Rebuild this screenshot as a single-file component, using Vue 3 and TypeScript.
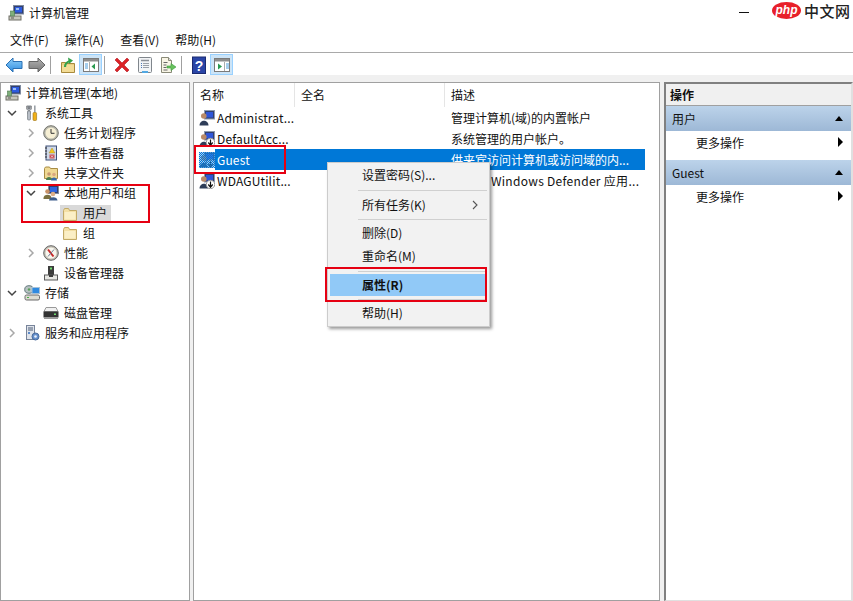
<script setup lang="ts">
interface TreeRow { label: string; depth: number; arrow: '' | 'open' | 'closed'; icon: string; selected?: boolean }
const tree: TreeRow[] = [
  { label: '计算机管理(本地)', depth: 0, arrow: '', icon: 'computer' },
  { label: '系统工具', depth: 1, arrow: 'open', icon: 'tools' },
  { label: '任务计划程序', depth: 2, arrow: 'closed', icon: 'clock' },
  { label: '事件查看器', depth: 2, arrow: 'closed', icon: 'event' },
  { label: '共享文件夹', depth: 2, arrow: 'closed', icon: 'share' },
  { label: '本地用户和组', depth: 2, arrow: 'open', icon: 'users' },
  { label: '用户', depth: 3, arrow: '', icon: 'folder', selected: true },
  { label: '组', depth: 3, arrow: '', icon: 'folder' },
  { label: '性能', depth: 2, arrow: 'closed', icon: 'perf' },
  { label: '设备管理器', depth: 2, arrow: '', icon: 'device' },
  { label: '存储', depth: 1, arrow: 'open', icon: 'storage' },
  { label: '磁盘管理', depth: 2, arrow: '', icon: 'disk' },
  { label: '服务和应用程序', depth: 1, arrow: 'closed', icon: 'service' },
]
const users = [
  { name: 'Administrat...', desc: '管理计算机(域)的内置帐户', down: false, sel: false, wide: false },
  { name: 'DefaultAcc...', desc: '系统管理的用户帐户。', down: true, sel: false, wide: false },
  { name: 'Guest', desc: '供来宾访问计算机或访问域的内...', down: true, sel: true, wide: false },
  { name: 'WDAGUtilit...', desc: '系统为 Windows Defender 应用...', down: true, sel: false, wide: true },
]
const menus = ['文件(F)', '操作(A)', '查看(V)', '帮助(H)']
const actions = ['用户', 'Guest']
</script>

<template>
  <div class="win">
    <div class="title">
      <svg class="i16" viewBox="0 0 16 16"><rect x="5.500" y="0.500" width="10" height="8.500" fill="#33406e" stroke="#7e8aa0"/><rect x="7" y="2" width="7" height="5.500" fill="#2d5be0"/><rect x="8" y="3" width="3" height="2" fill="#9cc0f4"/><rect x="1" y="11" width="12" height="4" fill="#c6c6bc" stroke="#6f6f66"/><rect x="2.500" y="6" width="4" height="5" fill="#7fae7a" stroke="#4c7a50" stroke-width=".6"/><rect x="3" y="12.500" width="3" height="1" fill="#5a5a52"/></svg>
      <span class="title-text">计算机管理</span>
      <span class="min"></span>
    </div>
    <div class="menubar">
      <span v-for="m in menus" :key="m" class="menu">{{ m }}</span>
    </div>
    <div class="toolbar">
      <span class="tb"><svg viewBox="0 0 18 18"><defs><linearGradient id="bk" x1="0" y1="0" x2="0" y2="1"><stop offset="0" stop-color="#8fd0fa"/><stop offset="1" stop-color="#2f8ce0"/></linearGradient></defs><path d="M1 9l7-7v3.500h9v7H8V16z" fill="url(#bk)" stroke="#2a70b4"/></svg></span>
      <span class="tb"><svg viewBox="0 0 18 18"><defs><linearGradient id="fw" x1="0" y1="0" x2="0" y2="1"><stop offset="0" stop-color="#b4b4b4"/><stop offset="1" stop-color="#777"/></linearGradient></defs><path d="M17 9l-7-7v3.500H1v7h9V16z" fill="url(#fw)" stroke="#666"/></svg></span>
      <span class="sep"></span>
      <span class="tb"><svg viewBox="0 0 18 18"><path d="M2.500 6.500h4l1 1h8v9h-13z" fill="#eacf82" stroke="#a88a3c"/><path d="M3 9h12v7H3z" fill="#f3dc96"/><path d="M6 11c0-4 2-5 5-6" stroke="#34a24a" stroke-width="2.200" fill="none"/><path d="M9 1.500l5 3-4 3.500z" fill="#34a24a"/></svg></span>
      <span class="tb on"><svg viewBox="0 0 18 18"><rect x="1.500" y="2.500" width="15" height="13" fill="#fff" stroke="#7a7a7a"/><rect x="2" y="3" width="14" height="2.500" fill="#8e8e8e"/><path d="M7.500 6v9" stroke="#aaa"/><path d="M3 8h3M3 10h3M3 12h3" stroke="#4b9ad8"/><path d="M13 7.500v6l-3.500-3z" fill="#2a9a50"/></svg></span>
      <span class="sep"></span>
      <span class="tb"><svg viewBox="0 0 18 18"><path d="M2 4l2-2 5 5 5-5 2 2-5 5 5 5-2 2-5-5-5 5-2-2 5-5z" fill="#dc2226" stroke="#b01820" stroke-width=".6"/></svg></span>
      <span class="tb"><svg viewBox="0 0 18 18"><rect x="2.500" y="1.500" width="13" height="15" rx="1" fill="#f2f4f6" stroke="#80868c"/><path d="M5 4.500h8" stroke="#8a8f96" stroke-width="1.500"/><path d="M7 7.500h6M7 9.500h6M7 11.500h6" stroke="#9aa0a8"/><path d="M5 7.500h1M5 9.500h1M5 11.500h1" stroke="#4b78b8"/><rect x="6" y="15" width="6" height="2" fill="#52a8e2"/></svg></span>
      <span class="tb"><svg viewBox="0 0 18 18"><path d="M2.500 1.500h7l3 3v12h-10z" fill="#f8f5e6" stroke="#8a8a78"/><path d="M9.500 1.500v3h3" fill="#ddd" stroke="#8a8a78"/><path d="M4.500 6.500h4M4.500 9h3M4.500 11.500h3M4.500 14h4" stroke="#666"/><path d="M8 10h4V7.500l5 3.500-5 3.500V12H8z" fill="#68c25c" stroke="#3d9a40" stroke-width=".6"/></svg></span>
      <span class="sep"></span>
      <span class="tb"><svg viewBox="0 0 18 18"><rect x="2.500" y="1" width="13" height="16.500" fill="#2a45a6" stroke="#1a2a70"/><text x="9" y="14.500" font-size="14" font-weight="700" fill="#fff" text-anchor="middle" font-family="Liberation Sans">?</text></svg></span>
      <span class="tb on"><svg viewBox="0 0 18 18"><rect x="1.500" y="2.500" width="15" height="13" fill="#fff" stroke="#7a7a7a"/><rect x="2" y="3" width="14" height="2.500" fill="#8e8e8e"/><path d="M11.500 6v9" stroke="#aaa"/><path d="M13 8h3M13 10h3M13 12h3" stroke="#4b9ad8"/><path d="M5 7.500v6l4-3z" fill="#2a9a50"/></svg></span>
    </div>
    <div class="panes">
      <div class="pane left">
        <div v-for="r in tree" :key="r.label" class="trow" :class="'d' + r.depth">
          <span class="arrow">
            <svg v-if="r.arrow === 'open'" viewBox="0 0 10 10"><path d="M1 3l4 4 4-4" fill="none" stroke="#444" stroke-width="1.500"/></svg>
            <svg v-else-if="r.arrow === 'closed'" viewBox="0 0 10 10"><path d="M3 1l4 4-4 4" fill="none" stroke="#a8a8a8" stroke-width="1.500"/></svg>
          </span>
          <span class="tcell" :class="{ sel: r.selected }">
            <svg class="i16" viewBox="0 0 16 16">
              <g v-if="r.icon === 'computer'"><rect x="5.500" y="0.500" width="10" height="8.500" fill="#33406e" stroke="#7e8aa0"/><rect x="7" y="2" width="7" height="5.500" fill="#2d5be0"/><rect x="8" y="3" width="3" height="2" fill="#9cc0f4"/><rect x="1" y="11" width="12" height="4" fill="#c6c6bc" stroke="#6f6f66"/><rect x="2.500" y="6" width="4" height="5" fill="#7fae7a" stroke="#4c7a50" stroke-width=".6"/><rect x="3" y="12.500" width="3" height="1" fill="#5a5a52"/></g>
              <g v-else-if="r.icon === 'tools'"><path d="M5 0.500v4M5 6v3" stroke="#888e96" stroke-width="3"/><path d="M2.500 1v3l1.500 1.500h2L7.500 4V1L6 1v2.500H4V1z" fill="#a8aeb6" stroke="#666" stroke-width=".5"/><rect x="3.500" y="6" width="3" height="9" rx="1" fill="#b8bec6" stroke="#686e76" stroke-width=".6"/><rect x="10" y="0.500" width="1.600" height="7" fill="#9aa0a6"/><rect x="9" y="7.500" width="3.600" height="8" rx="1" fill="#f0b018" stroke="#9a7010" stroke-width=".6"/></g>
              <g v-else-if="r.icon === 'clock'"><circle cx="8" cy="8" r="7.300" fill="#b8b8ac" stroke="#74746c"/><circle cx="8" cy="8" r="5.500" fill="#f6efd4"/><path d="M8 4v4.300h3.500" fill="none" stroke="#333" stroke-width="1"/></g>
              <g v-else-if="r.icon === 'event'"><rect x="3" y="1" width="10.500" height="14" fill="#cfd9e8" stroke="#3e5078"/><path d="M2 3h2M2 6h2M2 9h2M2 12h2" stroke="#333" stroke-width="1.200"/><path d="M9 3l3 5H6z" fill="#f2c81c" stroke="#a08020" stroke-width=".4"/><rect x="6.500" y="9.500" width="5" height="4" fill="#c84a50"/><path d="M8 10.500l2 2M10 10.500l-2 2" stroke="#fff" stroke-width=".7"/></g>
              <g v-else-if="r.icon === 'share'"><path d="M1.500 3.500l1-1.500h4l1 1.500h7v10h-13z" fill="#efd994" stroke="#a88c44"/><circle cx="6" cy="9" r="1.800" fill="#c89870"/><path d="M3 15c0-4 6-4 6 0z" fill="#4a8050"/><circle cx="11" cy="9.500" r="1.800" fill="#d8a880"/><path d="M8 15.500c0-4 6-4 6 0z" fill="#356aa8"/></g>
              <g v-else-if="r.icon === 'users'"><rect x="5.500" y="0.500" width="10" height="8" fill="#33406e" stroke="#7e8aa0"/><rect x="7" y="2" width="7" height="5" fill="#2f66e0"/><circle cx="4.500" cy="6.500" r="2.300" fill="#c89268"/><path d="M0.500 13c0-4.500 8-4.500 8 0v1h-8z" fill="#7a7040"/><circle cx="10" cy="9" r="2.300" fill="#dcae88"/><path d="M6 15.500c0-4.500 8.500-4.500 8.500 0z" fill="#3d5d8c"/></g>
              <g v-else-if="r.icon === 'folder'"><path d="M1.500 4.500l1-2h4l1 2h7v10h-13z" fill="#f3dfa4" stroke="#c2aa68"/><path d="M2.500 6h11v7.500h-11z" fill="#fbefc6"/></g>
              <g v-else-if="r.icon === 'perf'"><circle cx="8" cy="8" r="7.300" fill="#c4c0b4" stroke="#666"/><circle cx="8" cy="8" r="5.500" fill="#f8f6ee"/><path d="M5 4.500l5.500 7" stroke="#c82828" stroke-width="2"/><path d="M11 4.500L5 11.500" stroke="#6a7a90" stroke-width="1"/></g>
              <g v-else-if="r.icon === 'device'"><rect x="5" y="1" width="6" height="9" fill="#3c3c3c"/><rect x="7" y="2.500" width="2" height="2" fill="#6fdc6f"/><rect x="1.500" y="10" width="13" height="5" fill="#e8e8e4" stroke="#5a5a5a"/><rect x="6" y="10" width="4" height="2" fill="#3c3c3c"/></g>
              <g v-else-if="r.icon === 'storage'"><ellipse cx="5" cy="4.500" rx="4.300" ry="3.800" fill="#b8c2c2" stroke="#62787c"/><circle cx="5" cy="4.500" r="1.200" fill="#5aa05a"/><rect x="8" y="2.500" width="7.500" height="6" fill="#2f8ae0" stroke="#a4c0d8"/><rect x="1" y="10" width="14.500" height="5" rx="1.500" fill="#dcdcd2" stroke="#6a6a6a"/><rect x="3" y="12" width="2" height="1" fill="#48b048"/></g>
              <g v-else-if="r.icon === 'disk'"><path d="M3 2.500h10l2 4H1z" fill="#f0f0f0" stroke="#999"/><rect x="0.500" y="6.500" width="15" height="6" fill="#333"/><rect x="11" y="8.500" width="2" height="1.500" fill="#6fdc6f"/><rect x="1" y="12.500" width="14" height="1.500" fill="#999"/></g>
              <g v-else><rect x="2.500" y="0.500" width="8" height="14" fill="#dfe3ea" stroke="#77849a"/><path d="M4 3h5M4 5h5" stroke="#4e5f78"/><rect x="4" y="7" width="2" height="2" fill="#5c8ac8"/><circle cx="11.500" cy="11.500" r="3.500" fill="#6590cc" stroke="#4a6a9a"/><circle cx="11.500" cy="11.500" r="1.300" fill="#eaf0fa"/></g>
            </svg>
            <span class="tlabel">{{ r.label }}</span>
          </span>
        </div>
      </div>
      <div class="pane mid">
        <div class="lhead">
          <span class="col c1">名称</span>
          <span class="col c2">全名</span>
          <span class="col c3">描述</span>
        </div>
        <div v-for="u in users" :key="u.name" class="lrow">
          <span class="lname">
            <svg class="i16" viewBox="0 0 16 16">
              <defs><pattern id="dither" width="2" height="2" patternUnits="userSpaceOnUse"><rect width="1" height="1" fill="#0078d7"/><rect x="1" y="1" width="1" height="1" fill="#0078d7"/></pattern></defs>
              <rect x="5.500" y="0.500" width="10" height="8.500" fill="#33406e" stroke="#8e9ab0"/><rect x="7" y="2" width="7" height="5.500" fill="#2f56d8"/><circle cx="4.800" cy="6" r="2.800" fill="#b98a68"/><path d="M0.500 15.500c0-6.500 9-6.500 9 0z" fill="#2e3d58"/>
              <g v-if="u.down"><circle cx="11.500" cy="11.500" r="4.200" fill="#fff" stroke="#9a9a9a"/><path d="M11.500 8.500v5M9.300 11.500l2.200 2.700 2.200-2.700" stroke="#111" stroke-width="1.200" fill="none"/></g>
              <g v-if="u.sel"><rect width="16" height="16" fill="#4a9ae8" opacity=".45"/><rect width="16" height="16" fill="url(#dither)"/></g>
            </svg>
            <span class="ltext" :class="{ lsel: u.sel }">{{ u.name }}</span>
          </span>
          <span class="lfull" :class="{ lsel: u.sel }"></span>
          <span class="ldesc" :class="{ lsel: u.sel, wide: u.wide }">{{ u.desc }}</span>
        </div>
      </div>
      <div class="pane right">
        <div class="ahead">操作</div>
        <template v-for="a in actions" :key="a">
          <div class="agroup"><span>{{ a }}</span><i class="up"></i></div>
          <div class="aitem"><span>更多操作</span><i class="rt"></i></div>
        </template>
      </div>
    </div>

    <div class="ctx">
      <div class="citem">设置密码(S)...</div>
      <div class="csep"></div>
      <div class="citem sub">所有任务(K)<svg viewBox="0 0 8 10"><path d="M2 1l4 4-4 4" fill="none" stroke="#555" stroke-width="1.100"/></svg></div>
      <div class="csep"></div>
      <div class="citem">删除(D)</div>
      <div class="citem">重命名(M)</div>
      <div class="csep"></div>
      <div class="citem hot">属性(R)</div>
      <div class="csep"></div>
      <div class="citem">帮助(H)</div>
    </div>

    <div class="mark m1"></div>
    <div class="mark m2"></div>
    <div class="mark m3"></div>

    <div class="wm">
      <span class="php">php</span><span class="cn">中文网</span>
    </div>
  </div>
</template>

<style>
html, body { margin: 0; background: #fff; overflow: hidden; }
</style>

<style scoped>
.win {
  position: relative;
  width: 853px;
  height: 601px;
  overflow: hidden;
  background: #fff;
  font-family: "Noto Sans CJK SC", "Liberation Sans", sans-serif;
  font-size: 12px;
  color: #111;
  display: flex;
  flex-direction: column;
}
.i16 { width: 16px; height: 16px; flex: none; }
.title { height: 28px; box-sizing: border-box; padding: 0 0 2px 8px; display: flex; align-items: center; gap: 5px; flex: none; }
.title-text { font-size: 12px; margin-top: -1px; }
.min { width: 10px; height: 1px; background: #111; margin-left: 645px; margin-top: -2px; }
.menubar { height: 24px; box-sizing: content-box; display: flex; flex: none; align-items: center; padding: 0 0 0 10px; gap: 16px; border-bottom: 1px solid #a9a9a9; }
.menu { margin-top: -2px; }
.toolbar { height: 22px; flex: none; display: flex; align-items: center; padding-left: 2px; }
.tb { width: 23px; height: 21px; margin-top: 1px; display: flex; align-items: center; justify-content: center; box-sizing: border-box; }
.tb svg { width: 18px; height: 18px; }
.tb.on { background: #cce4f7; border: 1px solid #99d1ff; }
.sep { width: 1px; height: 18px; background: #a0a0a0; margin: 1px 5px 0 2px; }
.panes { flex: 1; min-height: 0; display: flex; gap: 3px; background: #f0f0f0; padding-top: 7px; }
.pane { background: #fff; border: 1px solid #a0a0a0; box-sizing: border-box; }
.left { width: 190px; }
.mid { width: 467px; }
.right { flex: 1; margin-left: 1px; border-width: 2px 2px 1px 2px; border-color: #808080 #e0e0e0 #e0e0e0 #808080; }
.trow { height: 20px; display: flex; align-items: center; white-space: nowrap; }
.trow.d0 { padding-left: 4px; }
.trow.d0 .arrow { display: none; }
.trow.d1 { padding-left: 6px; }
.trow.d2 { padding-left: 25px; }
.trow.d3 { padding-left: 44px; }
.arrow { width: 10px; height: 10px; margin-right: 7px; flex: none; display: block; }
.arrow svg { width: 10px; height: 10px; display: block; }
.d3 .arrow { margin-right: 5px; }
.tcell { display: flex; align-items: center; gap: 5px; height: 18px; }
.tcell.sel { background: #d9d9d9; padding: 0 4px 0 2px; margin-top: 2px; margin-left: 0; }
.d3 .tcell:not(.sel) { padding-left: 2px; }
.tlabel { line-height: 17px; margin-top: -2px; }
.sel .tlabel { margin-top: -4px; }
.lhead { height: 24px; display: flex; }
.col { height: 24px; line-height: 24px; box-sizing: border-box; padding-left: 6px; border-right: 1px solid #e5e5e5; }
.c1 { width: 101px; }
.c2 { width: 150px; }
.c3 { flex: 1; border-right: none; }
.lrow { display: flex; height: 21px; align-items: center; white-space: nowrap; }
.lname { width: 101px; display: flex; align-items: center; padding-left: 5px; box-sizing: border-box; flex: none; height: 21px; }
.ltext { flex: 1; height: 21px; line-height: 22px; padding-left: 2px; letter-spacing: .15px; }
.lfull { width: 150px; height: 21px; flex: none; }
.ldesc { flex: 1; height: 21px; line-height: 22px; padding-left: 6px; margin-right: 14px; }
.ldesc.wide { letter-spacing: .3px; }
.lsel { background: #0078d7; color: #fff; }
.ahead { height: 22px; box-sizing: border-box; line-height: 21px; padding-left: 4px; font-weight: 700; background: #f0f0f0; border-bottom: 1px solid #a0a0a0; }
.agroup { height: 25px; display: flex; align-items: center; justify-content: space-between; padding: 0 8px 0 6px; background: linear-gradient(#bcd3ea, #9db8d6); }
.up { width: 0; height: 0; border-bottom: 5px solid #000; border-left: 4.500px solid transparent; border-right: 4.500px solid transparent; }
.aitem { height: 29px; box-sizing: border-box; padding: 0 8px 7px 30px; display: flex; align-items: center; justify-content: space-between; }
.rt { width: 0; height: 0; border-left: 5px solid #000; border-top: 5px solid transparent; border-bottom: 5px solid transparent; }
.ctx {
  position: absolute;
  left: 327px;
  top: 162px;
  width: 163px;
  height: 165px;
  box-sizing: border-box;
  background: #f2f2f2;
  border: 1px solid #ccc;
  box-shadow: 2px 2px 3px rgba(0, 0, 0, .4);
  padding-top: 1px;
}
.citem { height: 23px; line-height: 21px; padding-left: 32px; margin: 0 3px 0 2px; position: relative; }
.citem.sub { line-height: 23px; }
.citem.sub svg { position: absolute; right: 7px; top: 7px; width: 8px; height: 10px; }
.csep { height: 1px; background: #d0d0d0; margin: 3px 2px 2px 30px; }
.citem.hot { height: 22px; background: #91c9f7; font-weight: 700; }
.mark { position: absolute; border: 2px solid #e60012; box-sizing: border-box; }
.m1 { left: 21px; top: 184px; width: 129px; height: 39px; }
.m2 { left: 194px; top: 145px; width: 92px; height: 29px; }
.m3 { left: 325px; top: 267px; width: 162px; height: 35px; }
.wm { position: absolute; left: 772px; top: 2px; width: 81px; display: flex; align-items: center; height: 17px; }
.php { width: 29px; height: 17px; flex: none; border-radius: 50%; background: #e8202a; color: #fff; font: italic 700 12px/16px "Liberation Sans", sans-serif; text-align: center; }
.cn { font-size: 15px; font-weight: 500; line-height: 17px; color: #222; margin-left: 3px; letter-spacing: .5px; white-space: nowrap; }
</style>
